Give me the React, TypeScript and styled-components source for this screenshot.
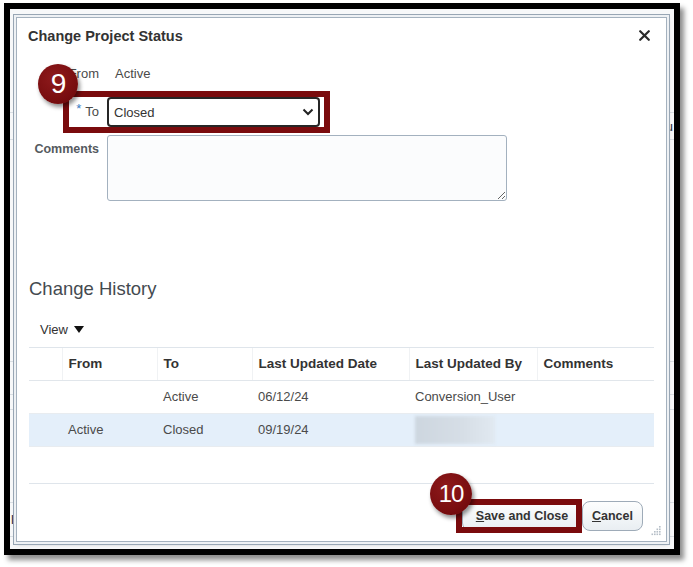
import React from "react";
import styled, { createGlobalStyle } from "styled-components";

const GlobalStyle = createGlobalStyle`
  html, body {
    margin: 0;
    padding: 0;
    background: #ffffff;
  }
  body {
    font-family: "Liberation Sans", Arial, sans-serif;
    color: #333333;
  }
`;

const Stage = styled.div`
  width: 693px;
  height: 567px;
  padding: 3px 0 0 4px;
  box-sizing: border-box;
  overflow: hidden;
`;

const Frame = styled.div`
  position: relative;
  width: 676px;
  height: 552px;
  box-sizing: border-box;
  border: 6px solid #000000;
  box-shadow: 4px 5px 5px rgba(0, 0, 0, 0.45);
  background: #f7f8f9;
  overflow: hidden;
`;

/* the application page that lies under the dialog */
const BgPage = styled.div`
  display: flex;
  flex-direction: column;
  height: 100%;
`;

const BgRow = styled.div<{ $h: number; $line?: boolean }>`
  height: ${(p) => p.$h}px;
  flex: none;
  box-sizing: border-box;
  border-bottom: ${(p) => (p.$line ? "1px solid #d9dee3" : "none")};
  display: flex;
  align-items: center;
  justify-content: space-between;
  padding: 0 1px 0 1px;
  font-size: 13px;
  color: #1f2b3a;
`;

const Dialog = styled.div`
  position: absolute;
  left: 6px;
  top: 8px;
  width: 651px;
  height: 525px;
  box-sizing: border-box;
  background: #ffffff;
  border: 1px solid #a4b1be;
  box-shadow: 0 0 0 2px #eef1f4, 0 0 0 3px #98a6b4, 1px 2px 4px rgba(0, 0, 0, 0.25);
  display: flex;
  flex-direction: column;
  padding: 0 12px;
`;

const Header = styled.div`
  height: 35px;
  display: flex;
  align-items: center;
  justify-content: space-between;
  flex: none;
`;

const Title = styled.h1`
  margin: 0 0 0 -1px;
  font-size: 14.5px;
  font-weight: bold;
  color: #333333;
`;

const CloseButton = styled.button`
  border: none;
  background: none;
  padding: 0;
  margin-right: 3px;
  width: 14px;
  height: 14px;
  display: flex;
  align-items: center;
  justify-content: center;
  cursor: pointer;
`;

const FieldRow = styled.div<{ $mt: number; $top?: boolean }>`
  display: grid;
  grid-template-columns: 70px auto;
  column-gap: 8px;
  align-items: ${(p) => (p.$top ? "start" : "center")};
  justify-content: start;
  margin-top: ${(p) => p.$mt}px;
  flex: none;
`;

const Label = styled.label<{ $strong?: boolean }>`
  text-align: right;
  font-size: ${(p) => (p.$strong ? "12.5px" : "13px")};
  font-weight: ${(p) => (p.$strong ? "bold" : "normal")};
  color: ${(p) => (p.$strong ? "#555a60" : "#4a4a4a")};
  line-height: 20px;
  margin-top: ${(p) => (p.$strong ? "4px" : "0")};
`;

const Required = styled.span`
  color: #3a7bbf;
  margin-right: 4px;
  position: relative;
  top: -3px;
`;

const Value = styled.span`
  font-size: 13px;
  color: #4a4a4a;
  line-height: 20px;
  margin-left: 8px;
`;

const Select = styled.div`
  width: 213px;
  height: 30px;
  box-sizing: border-box;
  border: 2px solid #262626;
  border-radius: 4px;
  background: #ffffff;
  display: flex;
  align-items: center;
  justify-content: space-between;
  padding: 0 4px 0 5px;
  font-size: 13px;
  color: #333333;
`;

const TextArea = styled.textarea`
  width: 400px;
  height: 66px;
  box-sizing: border-box;
  border: 1px solid #a3b1bf;
  border-radius: 3px;
  background: #fbfcfd;
  resize: both;
  margin: 0;
  font-family: inherit;
`;

const SectionTitle = styled.h2`
  margin: 76px 0 0 0;
  height: 24px;
  line-height: 24px;
  font-size: 18.5px;
  font-weight: normal;
  color: #444a50;
  flex: none;
`;

const ViewMenu = styled.div`
  margin-top: 16px;
  height: 24px;
  padding-left: 11px;
  display: flex;
  align-items: center;
  gap: 6px;
  font-size: 13px;
  color: #333333;
  flex: none;
`;

const TableWrap = styled.div`
  margin-top: 6px;
  height: 137px;
  box-sizing: border-box;
  border-top: 1px solid #dfe5eb;
  border-bottom: 1px solid #dfe5eb;
  flex: none;
`;

const Table = styled.table`
  width: 100%;
  border-collapse: collapse;
  table-layout: fixed;
`;

const Th = styled.th<{ $w?: number }>`
  box-sizing: border-box;
  width: ${(p) => (p.$w ? `${p.$w}px` : "auto")};
  height: 32px;
  padding: 0 0 0 6px;
  text-align: left;
  font-size: 13.5px;
  font-weight: bold;
  color: #333333;
  border-bottom: 1px solid #e1e6eb;
  border-left: 1px solid #f0f2f4;
  &:first-child {
    border-left: none;
  }
`;

const Tr = styled.tr<{ $selected?: boolean }>`
  background: ${(p) => (p.$selected ? "#e4effa" : "transparent")};
`;

const Td = styled.td`
  height: 32px;
  padding: 0 0 0 6px;
  font-size: 13px;
  color: #4a4a4a;
  border-bottom: 1px solid #e8ecf0;
`;

const Redacted = styled.div`
  width: 80px;
  height: 28px;
  background: linear-gradient(90deg, #cdd6df 0%, #d6dee6 60%, #e1e9f1 100%);
  filter: blur(1.5px);
`;

const Footer = styled.div`
  margin-top: 17px;
  display: flex;
  justify-content: flex-end;
  padding-right: 11px;
  flex: none;
`;

const Button = styled.button<{ $w: number }>`
  width: ${(p) => p.$w}px;
  height: 30px;
  border: 1px solid #9eabb8;
  border-radius: 8px;
  background: linear-gradient(#fdfefe, #e9eef2);
  font-family: "Liberation Sans", Arial, sans-serif;
  font-size: 12.5px;
  font-weight: bold;
  color: #333333;
  padding: 0;
  cursor: pointer;
  & u {
    text-decoration: underline;
  }
`;

const Highlight = styled.div<{ $l: number; $t: number; $w: number; $h: number }>`
  position: absolute;
  left: ${(p) => p.$l}px;
  top: ${(p) => p.$t}px;
  width: ${(p) => p.$w}px;
  height: ${(p) => p.$h}px;
  box-sizing: border-box;
  border: 6px solid #7a0b0d;
  pointer-events: none;
`;

const Badge = styled.div<{ $l: number; $t: number; $d: number; $fs: number }>`
  position: absolute;
  left: ${(p) => p.$l}px;
  top: ${(p) => p.$t}px;
  width: ${(p) => p.$d}px;
  height: ${(p) => p.$d}px;
  border-radius: 50%;
  background: radial-gradient(circle at 40% 35%, #8e1a1c 0%, #7a0e10 60%, #650708 100%);
  box-shadow: 2px 3px 4px rgba(0, 0, 0, 0.45);
  color: #ffffff;
  font-size: ${(p) => p.$fs}px;
  display: flex;
  align-items: center;
  justify-content: center;
  letter-spacing: -1px;
`;

const Grip = styled.svg`
  position: absolute;
  right: 5px;
  bottom: 5px;
`;

const bgRows = [
  { h: 104, line: true },
  { h: 27, line: true, right: "u" },
  { h: 222, line: true },
  { h: 33, line: true },
  { h: 15, line: true },
  { h: 93, line: true },
  { h: 34, line: true, left: "le" },
];

const history = [
  { from: "", to: "Active", date: "06/12/24", by: "Conversion_User" },
  { from: "Active", to: "Closed", date: "09/19/24", by: null, selected: true },
];

export default function App() {
  return (
    <>
      <GlobalStyle />
      <Stage>
        <Frame>
          <BgPage>
            {bgRows.map((r, i) => (
              <BgRow key={i} $h={r.h} $line={r.line}>
                <span>{r.left ?? ""}</span>
                <span>{r.right ?? ""}</span>
              </BgRow>
            ))}
          </BgPage>

          <Dialog>
            <Header>
              <Title>Change Project Status</Title>
              <CloseButton aria-label="Close">
                <svg width="11" height="11" viewBox="0 0 11 11">
                  <path d="M1.2 1.2 L9.8 9.8 M9.8 1.2 L1.2 9.8" stroke="#2a2a2a" strokeWidth="2.2" strokeLinecap="round" />
                </svg>
              </CloseButton>
            </Header>

            <FieldRow $mt={11}>
              <Label>From</Label>
              <Value>Active</Value>
            </FieldRow>
            <FieldRow $mt={13}>
              <Label>
                <Required>*</Required>To
              </Label>
              <Select>
                <span>Closed</span>
                <svg width="12" height="8" viewBox="0 0 12 8">
                  <path d="M1.5 1.5 L6 6 L10.5 1.5" fill="none" stroke="#222" strokeWidth="2" />
                </svg>
              </Select>
            </FieldRow>
            <FieldRow $mt={8} $top>
              <Label $strong>Comments</Label>
              <TextArea />
            </FieldRow>

            <SectionTitle>Change History</SectionTitle>
            <ViewMenu>
              View
              <svg width="10" height="7" viewBox="0 0 10 7">
                <path d="M0 0 H10 L5 7 Z" fill="#111" />
              </svg>
            </ViewMenu>

            <TableWrap>
              <Table>
                <thead>
                  <tr>
                    <Th $w={33}></Th>
                    <Th $w={95}>From</Th>
                    <Th $w={95}>To</Th>
                    <Th $w={157}>Last Updated Date</Th>
                    <Th $w={128}>Last Updated By</Th>
                    <Th>Comments</Th>
                  </tr>
                </thead>
                <tbody>
                  {history.map((h, i) => (
                    <Tr key={i} $selected={h.selected}>
                      <Td></Td>
                      <Td>{h.from}</Td>
                      <Td>{h.to}</Td>
                      <Td>{h.date}</Td>
                      <Td>{h.by ?? <Redacted />}</Td>
                      <Td></Td>
                    </Tr>
                  ))}
                </tbody>
              </Table>
            </TableWrap>

            <Footer>
              <Button $w={120}>
                <u>S</u>ave and Close
              </Button>
              <Button $w={61}>
                <u>C</u>ancel
              </Button>
            </Footer>

            <Grip width="10" height="10" viewBox="0 0 10 10">
              {[
                [8, 0], [8, 2.5], [5.5, 2.5], [8, 5], [5.5, 5], [3, 5],
                [8, 7.5], [5.5, 7.5], [3, 7.5], [0.5, 7.5],
              ].map(([x, y], i) => (
                <rect key={i} x={x} y={y} width="1.6" height="1.6" fill="#b5bec7" />
              ))}
            </Grip>

            <Highlight $l={46} $t={73} $w={267} $h={42} />
            <Badge $l={21} $t={46} $d={40} $fs={28}>9</Badge>
            <Highlight $l={439} $t={481} $w={126} $h={34} />
            <Badge $l={413} $t={455} $d={42} $fs={24}>10</Badge>
          </Dialog>
        </Frame>
      </Stage>
    </>
  );
}
